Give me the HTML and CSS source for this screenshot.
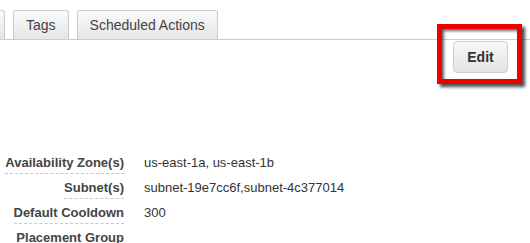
FILE: index.html
```html
<!DOCTYPE html>
<html>
<head>
<meta charset="utf-8">
<link rel="stylesheet" href="styles.css">
</head>
<body>
<div class="page">
  <div class="tabs">
    <div class="tab tab-cut"></div>
    <div class="tab">Tags</div>
    <div class="tab">Scheduled Actions</div>
  </div>
  <div class="actions">
    <button class="btn">Edit</button>
  </div>
  <div class="details">
    <div class="label">Availability Zone(s)</div>
    <div class="value">us-east-1a, us-east-1b</div>
    <div class="label">Subnet(s)</div>
    <div class="value">subnet-19e7cc6f,subnet-4c377014</div>
    <div class="label">Default Cooldown</div>
    <div class="value">300</div>
    <div class="label label-last">Placement Group</div>
    <div class="value"></div>
  </div>
  <div class="highlight"></div>
</div>
</body>
</html>
```
FILE: styles.css
```css
html, body {
  margin: 0;
  padding: 0;
  background: #fff;
  overflow: hidden;
}
body {
  font-family: Arial, "Liberation Sans", sans-serif;
  color: #333;
}
.page {
  position: relative;
  width: 530px;
  height: 243px;
  overflow: hidden;
}
.tabs {
  display: flex;
  gap: 8px;
  padding-top: 10px;
  border-bottom: 1px solid #cccccc;
  margin-left: -73px;
}
.tab {
  height: 28px;
  line-height: 28px;
  padding: 0 12px;
  border: 1px solid #cccccc;
  border-bottom: none;
  border-radius: 3px 3px 0 0;
  background: linear-gradient(#fafafa, #e6e6e6);
  font-size: 14px;
  color: #444;
}
.tab-cut {
  width: 52px;
}
.actions {
  display: flex;
  justify-content: flex-end;
  padding-right: 22px;
  margin-top: 1px;
}
.btn {
  width: 55px;
  height: 32px;
  padding: 0;
  border: 1px solid #d0d0d0;
  border-radius: 4px;
  background: linear-gradient(#f7f7f7, #e4e4e4);
  font-family: Arial, "Liberation Sans", sans-serif;
  font-weight: bold;
  font-size: 14px;
  color: #333;
}
.details {
  display: grid;
  grid-template-columns: 124px auto;
  column-gap: 20px;
  row-gap: 6px;
  margin-top: 82px;
  align-items: start;
}
.label {
  justify-self: end;
  font-size: 13px;
  line-height: 15px;
  font-weight: bold;
  color: #444;
  padding-bottom: 3px;
  border-bottom: 1px dashed #c8c8c8;
  white-space: nowrap;
}
.label-last {
  padding-bottom: 0;
  border-bottom: none;
}
.value {
  font-size: 13px;
  line-height: 15px;
  color: #333;
  white-space: nowrap;
}
.highlight {
  position: absolute;
  left: 437px;
  top: 24px;
  width: 75px;
  height: 50px;
  border: 5px solid #ee0000;
  box-shadow: 3px 3px 3px rgba(0, 0, 0, 0.7), inset 2px 2px 3px rgba(0, 0, 0, 0.6);
}
```
